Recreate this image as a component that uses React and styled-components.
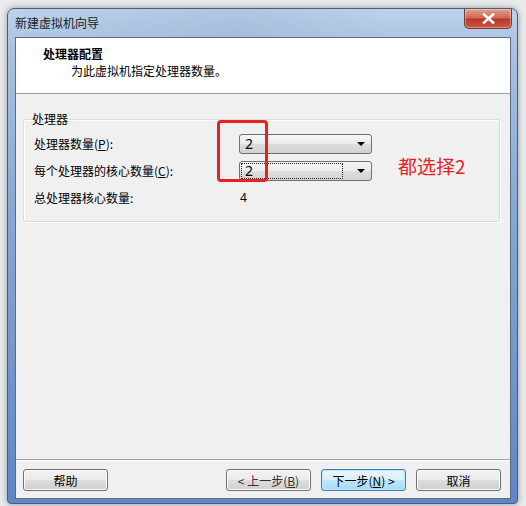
import React from "react";
import styled, { createGlobalStyle } from "styled-components";

const Global = createGlobalStyle`
    html, body {
        margin: 0;
        padding: 0;
        background: #e8eaec;
        font-family: "Noto Sans CJK SC", "Noto Sans", sans-serif;
        font-size: 12px;
        color: #000;
    }
`;

const Page = styled.div`
    width: 526px;
    height: 506px;
    padding: 8px 0 0 7px;
    box-sizing: border-box;
    overflow: hidden;
`;

const Window = styled.div`
    width: 511px;
    height: 496px;
    box-sizing: border-box;
    display: flex;
    flex-direction: column;
    padding: 0 6px 4px 7px;
    border: 1px solid #4a5e78;
    border-radius: 7px 7px 4px 4px;
    background: linear-gradient(180deg, #bcd2ea 0%, #a9c2e0 8%, #88a8d4 40%, #5f87c6 100%);
    box-shadow: 0 0 6px rgba(0, 0, 0, 0.35);
`;

const TitleBar = styled.div`
    height: 28px;
    display: flex;
    align-items: flex-start;
    justify-content: space-between;
    background: linear-gradient(90deg, transparent 0%, rgba(90, 120, 160, 0.12) 45%, transparent 75%);
`;

const Title = styled.span`
    margin-top: 5px;
    font-size: 12px;
    color: #1a1a1a;
`;

const CloseBtn = styled.div`
    width: 46px;
    height: 19px;
    margin-right: -1px;
    display: flex;
    align-items: center;
    justify-content: center;
    border: 1px solid #6e3a3a;
    border-top: none;
    border-radius: 0 0 5px 5px;
    background: linear-gradient(180deg, #e4a08e 0%, #d06a55 45%, #b9372a 55%, #cf5a40 100%);
    box-shadow: inset 0 0 0 1px rgba(255, 255, 255, 0.35);
`;

const Client = styled.div`
    flex: 1;
    display: flex;
    flex-direction: column;
    background: #f0f0f0;
    border: 1px solid #5b6c83;
    position: relative;
`;

const Header = styled.div`
    height: 56px;
    background: #fff;
    border-bottom: 1px solid #a0a0a0;
    padding: 7px 0 0 27px;
    box-sizing: border-box;
`;

const HeadTitle = styled.div`
    font-weight: bold;
    font-size: 12px;
    line-height: 17px;
`;

const HeadSub = styled.div`
    padding-left: 28px;
    line-height: 18px;
`;

const Body = styled.div`
    flex: 1;
    padding: 17px 10px 0 7px;
`;

const Group = styled.fieldset`
    margin: 0;
    padding: 3px 9px 10px 9px;
    border: 1px solid #dcdcdc;
    box-shadow: inset 1px 1px 0 #fff, 1px 1px 0 #fff;
    border-radius: 2px;
`;

const Legend = styled.legend`
    padding: 0 1px;
    margin-left: -2px;
    line-height: 16px;
`;

const Grid = styled.div`
    display: grid;
    grid-template-columns: 205px 133px;
    grid-auto-rows: 27px;
    align-items: center;
    padding-left: 1px;
`;

const Label = styled.span`
    line-height: 16px;
`;

const Value = styled.span`
    padding-left: 1px;
    font-family: "Noto Sans", sans-serif;
`;

const Combo = styled.div`
    height: 20px;
    box-sizing: border-box;
    display: flex;
    align-items: center;
    border: 1px solid #707070;
    border-radius: 3px;
    background: linear-gradient(180deg, #f6f6f6 0%, #ebebeb 48%, #dddddd 52%, #d3d3d3 100%);
    padding: 1px;
`;

const ComboText = styled.div`
    flex: 1;
    height: 100%;
    box-sizing: border-box;
    display: flex;
    align-items: center;
    padding-left: 3px;
    font-family: "Noto Sans", sans-serif;
    font-size: 14px;
    border: 1px dotted ${(p) => (p.focused ? "#202020" : "transparent")};
    margin-right: 14px;
`;

const Arrow = styled.div`
    width: 0;
    height: 0;
    border-left: 4px solid transparent;
    border-right: 4px solid transparent;
    border-top: 4px solid #000;
    margin-right: 5px;
`;

const Footer = styled.div`
    border-top: 1px solid #a0a0a0;
    box-shadow: inset 0 1px 0 #fff;
    height: 39px;
    box-sizing: border-box;
    display: flex;
    align-items: flex-start;
    padding: 9px 9px 0 7px;
    gap: 10px;
`;

const Spacer = styled.div`
    flex: 1;
`;

const Button = styled.div`
    width: 85px;
    height: 22px;
    box-sizing: border-box;
    display: flex;
    align-items: center;
    justify-content: center;
    border: 1px solid ${(p) => (p.primary ? "#3c7fb1" : "#707070")};
    border-radius: 3px;
    background: ${(p) =>
        p.primary
            ? "linear-gradient(180deg, #eaf6fd 0%, #d9f0fc 48%, #bee6fd 52%, #a7d9f5 100%)"
            : "linear-gradient(180deg, #f2f2f2 0%, #ebebeb 48%, #dddddd 52%, #cfcfcf 100%)"};
    box-shadow: inset 0 0 0 1px ${(p) => (p.primary ? "#bfe8fb" : "#fcfcfc")};
    color: ${(p) => (p.disabled ? "#333" : "#000")};
`;

const Mark = styled.span`
    text-decoration: underline;
`;

const RedBox = styled.div`
    position: absolute;
    left: 201px;
    top: 82px;
    width: 51px;
    height: 62px;
    box-sizing: border-box;
    border: 3px solid #e8211f;
    border-radius: 4px;
`;

const Note = styled.div`
    position: absolute;
    left: 382px;
    top: 114px;
    color: #e8211f;
    font-size: 19px;
    font-family: "Noto Sans CJK SC", sans-serif;
`;

const App = () => {
    return (
        <>
            <Global />
            <Page>
                <Window>
                    <TitleBar>
                        <Title>新建虚拟机向导</Title>
                        <CloseBtn>
                            <svg width="13" height="11" viewBox="0 0 13 11">
                                <path
                                    d="M2 1.5 L11 9.5 M11 1.5 L2 9.5"
                                    stroke="#fff"
                                    strokeWidth="2.6"
                                    strokeLinecap="square"
                                />
                            </svg>
                        </CloseBtn>
                    </TitleBar>
                    <Client>
                        <Header>
                            <HeadTitle>处理器配置</HeadTitle>
                            <HeadSub>为此虚拟机指定处理器数量。</HeadSub>
                        </Header>
                        <Body>
                            <Group>
                                <Legend>处理器</Legend>
                                <Grid>
                                    <Label>
                                        处理器数量(<Mark>P</Mark>):
                                    </Label>
                                    <Combo>
                                        <ComboText>2</ComboText>
                                        <Arrow />
                                    </Combo>
                                    <Label>
                                        每个处理器的核心数量(<Mark>C</Mark>):
                                    </Label>
                                    <Combo>
                                        <ComboText focused>2</ComboText>
                                        <Arrow />
                                    </Combo>
                                    <Label>总处理器核心数量:</Label>
                                    <Value>4</Value>
                                </Grid>
                            </Group>
                        </Body>
                        <Footer>
                            <Button>帮助</Button>
                            <Spacer />
                            <Button disabled>
                                &lt; 上一步(<Mark>B</Mark>)
                            </Button>
                            <Button primary>
                                下一步(<Mark>N</Mark>) &gt;
                            </Button>
                            <Button>取消</Button>
                        </Footer>
                        <RedBox />
                        <Note>都选择2</Note>
                    </Client>
                </Window>
            </Page>
        </>
    );
};

export default App;
